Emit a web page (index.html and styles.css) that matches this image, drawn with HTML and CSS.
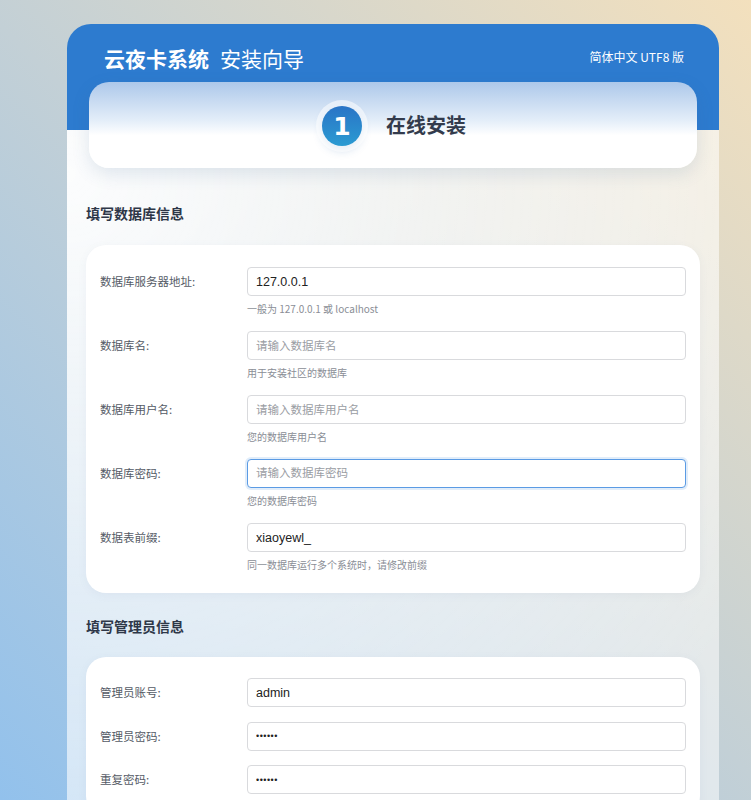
FILE: index.html
```html
<!DOCTYPE html>
<html lang="zh-CN">
<head>
<meta charset="utf-8">
<title>云夜卡系统 安装向导</title>
<link rel="stylesheet" href="styles.css">
</head>
<body>
<div class="panel">
  <div class="panel-head">
    <div class="brand">
      <span class="brand-name">云夜卡系统</span>
      <span class="brand-sub">安装向导</span>
    </div>
    <div class="edition">简体中文 UTF8 版</div>
  </div>
  <div class="step-card">
    <div class="step-num">1</div>
    <div class="step-title">在线安装</div>
  </div>

  <h2 class="section-title">填写数据库信息</h2>
  <div class="form-card">
    <div class="row">
      <label class="label">数据库服务器地址:</label>
      <div class="field">
        <input class="input" type="text" value="127.0.0.1">
        <div class="help">一般为 127.0.0.1 或 localhost</div>
      </div>
    </div>
    <div class="row">
      <label class="label">数据库名:</label>
      <div class="field">
        <input class="input" type="text" placeholder="请输入数据库名">
        <div class="help">用于安装社区的数据库</div>
      </div>
    </div>
    <div class="row">
      <label class="label">数据库用户名:</label>
      <div class="field">
        <input class="input" type="text" placeholder="请输入数据库用户名">
        <div class="help">您的数据库用户名</div>
      </div>
    </div>
    <div class="row">
      <label class="label">数据库密码:</label>
      <div class="field">
        <input class="input is-focus" type="password" placeholder="请输入数据库密码">
        <div class="help">您的数据库密码</div>
      </div>
    </div>
    <div class="row">
      <label class="label">数据表前缀:</label>
      <div class="field">
        <input class="input" type="text" value="xiaoyewl_">
        <div class="help">同一数据库运行多个系统时，请修改前缀</div>
      </div>
    </div>
  </div>

  <h2 class="section-title section-title--second">填写管理员信息</h2>
  <div class="form-card form-card--compact">
    <div class="row">
      <label class="label">管理员账号:</label>
      <div class="field"><input class="input" type="text" value="admin"></div>
    </div>
    <div class="row">
      <label class="label">管理员密码:</label>
      <div class="field"><input class="input" type="password" value="123456"></div>
    </div>
    <div class="row">
      <label class="label">重复密码:</label>
      <div class="field"><input class="input" type="password" value="123456"></div>
    </div>
  </div>

  <div class="actions">
    <button class="btn" type="button">立即安装</button>
  </div>
</div>
</body>
</html>
```

FILE: styles.css
```css
html {
  min-height: 100%;
  background: linear-gradient(45deg, #92c1ec 0%, #c3d0d6 50%, #f3e0bd 100%) fixed;
}

body {
  margin: 0;
  padding: 24px 0 40px;
  font-family: "Noto Sans CJK SC", "Noto Sans", sans-serif;
  color: #333;
}

.panel {
  width: 652px;
  margin-left: 67px;
  padding: 0 19px 30px;
  box-sizing: border-box;
  border-radius: 24px;
  background:
    linear-gradient(to bottom, #2d7bcf 0, #2d7bcf 106px, transparent 106px),
    radial-gradient(circle at 0 150px, rgba(255,255,255,0.95) 0, rgba(255,255,255,0.7) 380px, rgba(255,255,255,0.52) 800px);
}

.panel-head {
  display: flex;
  align-items: flex-start;
  justify-content: space-between;
  height: 58px;
  padding: 22px 16px 0 18px;
  box-sizing: border-box;
  color: #fff;
}

.brand {
  display: flex;
  align-items: center;
  gap: 11px;
  font-size: 21px;
  line-height: 24px;
}

.brand-name {
  font-weight: 700;
}

.brand-sub {
  font-weight: 400;
}

.edition {
  font-size: 12px;
  line-height: 16px;
  margin-top: 3px;
}

.step-card {
  display: flex;
  align-items: center;
  justify-content: center;
  gap: 24px;
  height: 86px;
  margin: 0 3px;
  border-radius: 20px;
  background: linear-gradient(to bottom, #adc8ea 0%, #e4eef9 45%, #ffffff 62%, #ffffff 100%);
  box-shadow: 0 6px 18px rgba(60, 100, 150, 0.14);
}

.step-num {
  width: 40px;
  height: 40px;
  border-radius: 50%;
  display: flex;
  align-items: center;
  justify-content: center;
  background: linear-gradient(to bottom, #2a74c6, #2b9bd2);
  box-shadow: 0 0 0 6px rgba(255, 255, 255, 0.55), 0 4px 10px rgba(40, 100, 170, 0.25);
  color: #fff;
  font-family: "DejaVu Sans", sans-serif;
  font-weight: 700;
  font-size: 25px;
  line-height: 1;
  margin-left: 2px;
  margin-top: 2px;
}

.step-title {
  font-size: 20px;
  font-weight: 700;
  color: #333b4c;
  line-height: 24px;
}

.section-title {
  margin: 35px 0 22px;
  font-size: 14px;
  line-height: 20px;
  font-weight: 700;
  color: #2e3748;
}

.section-title--second {
  margin-top: 23px;
  margin-bottom: 21px;
}

.form-card {
  background: #fff;
  border-radius: 20px;
  padding: 22px 14px 21px;
  box-shadow: 0 2px 10px rgba(80, 110, 150, 0.06);
}

.form-card--compact {
  padding-top: 21px;
  padding-bottom: 22px;
}

.form-card--compact .row {
  margin-bottom: 14.5px;
}

.form-card--compact .row:last-child {
  margin-bottom: 0;
}

.row {
  display: flex;
  align-items: flex-start;
  margin-bottom: 15px;
}

.row:last-child {
  margin-bottom: 0;
}

.label {
  width: 147px;
  flex: none;
  font-size: 11.5px;
  line-height: 29px;
  color: #555b66;
}

.field {
  flex: 1;
  min-width: 0;
}

.input {
  display: block;
  width: 100%;
  height: 29px;
  box-sizing: border-box;
  margin: 0;
  padding: 0 8px;
  border: 1px solid #d9dadd;
  border-radius: 4px;
  background: #fff;
  font-family: "Liberation Sans", "Noto Sans CJK SC", sans-serif;
  font-size: 12.5px;
  color: #222;
  outline: none;
}

.input::placeholder {
  font-family: "Noto Sans CJK SC", sans-serif;
  font-size: 11.5px;
  color: #9a9da3;
}

.input[type="password"] {
  font-size: 9px;
  letter-spacing: 0.5px;
}

.input[type="password"]::placeholder {
  letter-spacing: 0;
}

.input.is-focus {
  border-color: #5b9be4;
  box-shadow: 0 0 0 2px rgba(91, 155, 228, 0.18);
}

.help {
  margin-top: 6px;
  font-size: 10px;
  line-height: 14px;
  color: #8a8e96;
}

.actions {
  display: flex;
  justify-content: center;
  margin-top: 26px;
}

.btn {
  border: 0;
  border-radius: 20px;
  padding: 10px 48px;
  background: linear-gradient(to bottom, #2a74c6, #2b9bd2);
  color: #fff;
  font-family: "Noto Sans CJK SC", sans-serif;
  font-size: 14px;
}
```
